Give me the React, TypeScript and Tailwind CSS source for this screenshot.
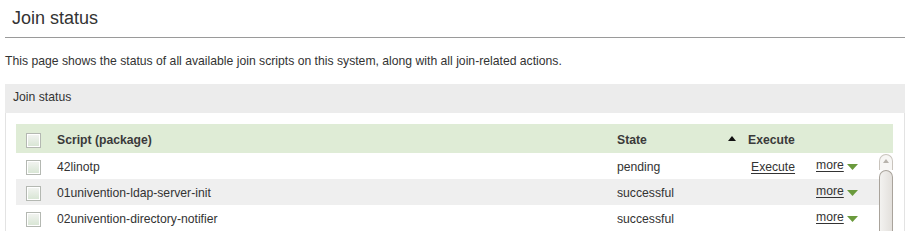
function Check() {
  return (
    <span className="box-border flex h-[15px] w-[15px] items-center justify-center border border-[#b4b8b2] bg-white p-[1px]">
      <span className="h-full w-full bg-gradient-to-b from-[#f1f3f0] to-[#d9e6d5]" />
    </span>
  );
}

function MoreLink() {
  return (
    <span className="flex items-center gap-[3px] pb-[4px]">
      <span className="underline underline-offset-2">more</span>
      <svg width="11" height="7" viewBox="0 0 11 7" className="mt-[6px]">
        <polygon points="0,0 11,0 5.5,6" fill="#6a9a3c" />
      </svg>
    </span>
  );
}

const rows = [
  { name: "42linotp", state: "pending", execute: true },
  { name: "01univention-ldap-server-init", state: "successful", execute: false },
  { name: "02univention-directory-notifier", state: "successful", execute: false },
];

export default function App() {
  return (
    <main className="h-[234px] w-[913px] overflow-hidden bg-white font-['Liberation_Sans',Arial,sans-serif] text-[12.2px] text-[#333]">
      <div className="ml-[5px] h-[38px] w-[900px] border-b border-[#9a9a9a] pl-[7px] pt-[7px] text-[18px] leading-[22px]">
        Join status
      </div>
      <p className="pl-[5px] pt-[16px] leading-[14px]">
        This page shows the status of all available join scripts on this system, along with all join-related actions.
      </p>
      <section className="ml-[5px] mt-[16px] w-[900px]">
        <div className="h-[29px] bg-[#ececec] pl-[8px] leading-[27px]">Join status</div>
        <div className="border-x border-[#e3e3e3] pl-[10px] pr-[11px] pt-[11px]">
          <div className="flex h-[29px] items-center bg-[#dfecd6] pt-[3px] font-bold text-[#3a3a3a]">
            <div className="w-[41px] pl-[10px]">
              <Check />
            </div>
            <div className="w-[560px]">Script (package)</div>
            <div className="flex w-[128px] items-center justify-between">
              <span>State</span>
              <svg width="8" height="5" viewBox="0 0 8 5" className="mr-[9px] mb-[2px]">
                <polygon points="0,5 8,5 4,0" fill="#111" />
              </svg>
            </div>
            <div className="pl-[3px]">Execute</div>
          </div>
          <div className="flex">
            <div className="flex-1">
              {rows.map((r, i) => (
                <div
                  key={r.name}
                  className={`flex h-[26px] items-center pt-[2px] ${i % 2 === 1 ? "bg-[#efefef]" : "bg-white"}`}
                >
                  <div className="w-[41px] pl-[10px]">
                    <Check />
                  </div>
                  <div className="w-[560px]">{r.name}</div>
                  <div className="w-[134px]">{r.state}</div>
                  <div className="w-[65px]">
                    {r.execute && <span className="underline underline-offset-2">Execute</span>}
                  </div>
                  <MoreLink />
                </div>
              ))}
            </div>
            <div className="flex w-[14px] flex-col pt-[1px]">
              <div className="flex h-[16px] items-start justify-center rounded-t-[7px] border border-b-0 border-[#c9c4bd] bg-[#f7f6f4] pt-[4px]">
                <svg width="6" height="4" viewBox="0 0 6 4">
                  <polygon points="0,4 6,4 3,0" fill="#b8b3ac" />
                </svg>
              </div>
              <div className="flex-1 rounded-t-[7px] border border-b-0 border-[#a9a39b] bg-gradient-to-r from-[#f3f2f0] to-[#e3e0dc]" />
            </div>
          </div>
        </div>
      </section>
    </main>
  );
}
